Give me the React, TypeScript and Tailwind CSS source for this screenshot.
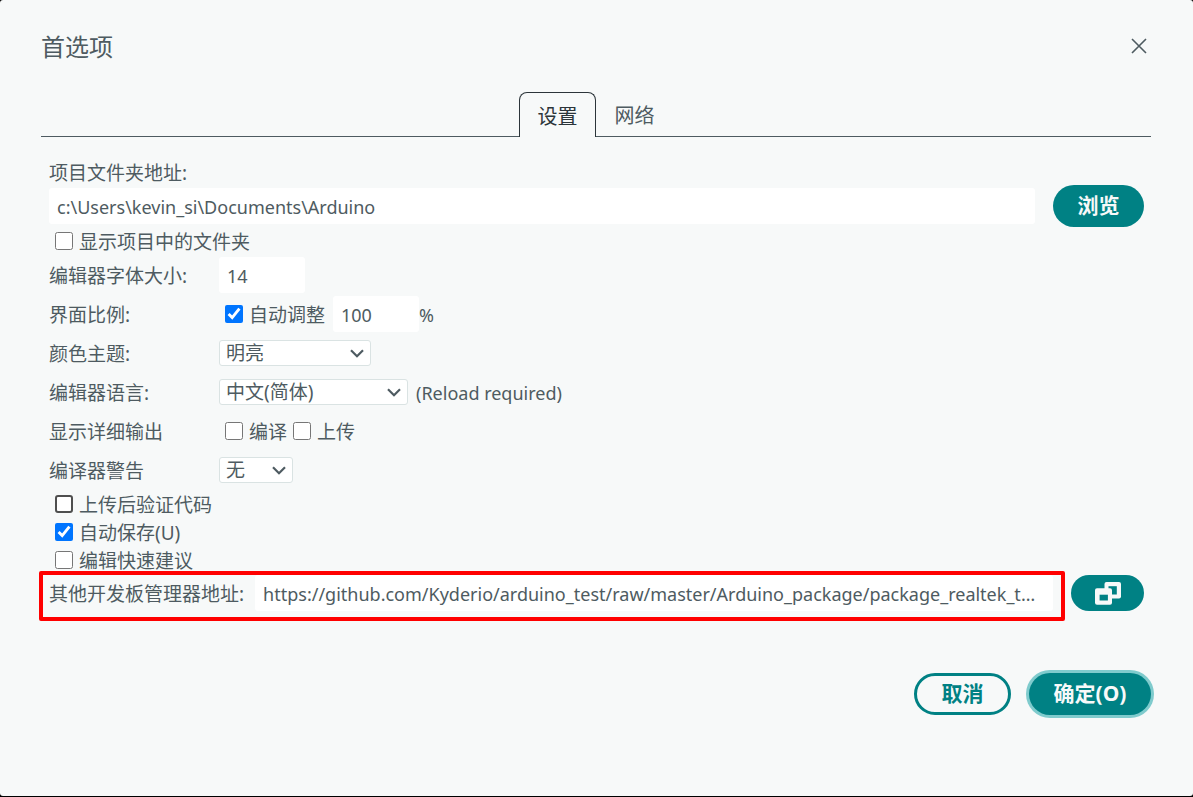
import React, { useState } from "react";

const TABS = ["设置", "网络"];

const BOARD_URL =
  "https://github.com/Kyderio/arduino_test/raw/master/Arduino_package/package_realtek_test_index.json";

function Check({
  id,
  label,
  defaultChecked,
  strong,
}: {
  id: string;
  label: string;
  defaultChecked?: boolean;
  strong?: boolean;
}) {
  return (
    <div className="flex h-7 items-center gap-[6px] pl-[6px]">
      <input
        id={id}
        type="checkbox"
        defaultChecked={defaultChecked}
        className={
          strong
            ? "size-[18px] appearance-none rounded-[3px] border-2 border-[#4f4f4f] bg-white checked:appearance-auto"
            : "size-[18px]"
        }
      />
      <label htmlFor={id} className="pt-0.5">
        {label}
      </label>
    </div>
  );
}

function Select({ id, options, width }: { id: string; options: string[]; width: string }) {
  return (
    <div className={`relative ${width}`}>
      <select
        id={id}
        className="block h-[26px] w-full appearance-none rounded-[3px] border border-[#dae3e3] bg-white pl-[6px] leading-6"
      >
        {options.map((o) => (
          <option key={o}>{o}</option>
        ))}
      </select>
      <svg
        viewBox="0 0 14 9"
        className="pointer-events-none absolute top-[9px] right-[7px] h-[9px] w-[14px]"
        fill="none"
        stroke="currentColor"
        strokeWidth="2.2"
        aria-hidden
      >
        <path d="M1 1.2 7 7.2l6-6" />
      </svg>
    </div>
  );
}

function Row({ label, htmlFor, children }: { label: string; htmlFor?: string; children: React.ReactNode }) {
  return (
    <div className="mb-[3px] flex h-9 items-center">
      {htmlFor ? (
        <label htmlFor={htmlFor} className="w-[170px] shrink-0 pt-0.5">
          {label}
        </label>
      ) : (
        <span className="w-[170px] shrink-0 pt-0.5">{label}</span>
      )}
      {children}
    </div>
  );
}

export default function App() {
  const [tab, setTab] = useState(0);

  return (
    <div className="flex min-h-screen flex-col bg-black pb-px">
      <div
        role="dialog"
        aria-labelledby="dialog-title"
        className="flex-1 rounded-[3px] bg-[#f7f9f9] pt-[33px] pr-[42px] pl-[41px] font-['Noto_Sans','Noto_Sans_CJK_SC',sans-serif] text-[19px] leading-7 text-[#4e5b61]"
      >
        <header className="flex h-7 items-center justify-between">
          <h1 id="dialog-title" className="text-[24px]">
            首选项
          </h1>
          <button type="button" aria-label="关闭" className="p-1 pb-[6px]">
            <svg viewBox="0 0 16 16" className="size-4" fill="none" stroke="currentColor" strokeWidth="1.6">
              <path d="M1 1l14 14M15 1L1 15" />
            </svg>
          </button>
        </header>

        <div role="tablist" className="mt-[31px] flex h-[45px] justify-center border-b border-[#4e5b61] text-[20px]">
          {TABS.map((t, i) => (
            <button
              key={t}
              type="button"
              role="tab"
              aria-selected={tab === i}
              onClick={() => setTab(i)}
              className={
                tab === i
                  ? "-mb-px w-[77px] rounded-t-lg border border-b-0 border-[#2c353a] bg-[#f7f9f9] pt-[3px] text-[#2c353a]"
                  : "w-[77px] pt-[3px]"
              }
            >
              {t}
            </button>
          ))}
        </div>

        <form className="mt-[22px] pr-[7px] pl-2" onSubmit={(e) => e.preventDefault()}>
          <label htmlFor="sketchbook" className="block">
            项目文件夹地址:
          </label>
          <div className="mt-px mb-[3px] flex h-9 items-center gap-[18px]">
            <input
              id="sketchbook"
              type="text"
              defaultValue="c:\Users\kevin_si\Documents\Arduino"
              className="h-9 min-w-0 flex-1 rounded-[3px] bg-white px-2 pt-0.5 text-[18px]"
            />
            <button
              type="button"
              className="h-[42px] w-[91px] shrink-0 rounded-full bg-[#008184] pb-0.5 text-[21px] font-bold text-[#f7f9f9]"
            >
              浏览
            </button>
          </div>

          <div className="mb-[2px]">
            <Check id="show-files" label="显示项目中的文件夹" />
          </div>

          <Row label="编辑器字体大小:" htmlFor="font-size">
            <input
              id="font-size"
              type="text"
              defaultValue="14"
              className="h-9 w-[86px] rounded-[3px] bg-white px-2 pt-0.5 text-[18px]"
            />
          </Row>
          <Row label="界面比例:">
            <Check id="auto-scale" label="自动调整" defaultChecked />
            <input
              type="text"
              aria-label="界面比例"
              defaultValue="100"
              className="ml-2 h-9 w-[86px] rounded-[3px] bg-white px-2 pt-0.5 text-[18px]"
            />
            <span className="pt-0.5 text-[18px]">%</span>
          </Row>
          <Row label="颜色主题:" htmlFor="theme">
            <Select id="theme" options={["明亮", "暗黑"]} width="w-[152px]" />
          </Row>
          <Row label="编辑器语言:" htmlFor="language">
            <Select id="language" options={["中文(简体)", "English"]} width="w-[189px]" />
            <span className="ml-2 pt-0.5 text-[18px]">(Reload required)</span>
          </Row>
          <Row label="显示详细输出">
            <Check id="verbose-compile" label="编译" />
            <Check id="verbose-upload" label="上传" />
          </Row>
          <Row label="编译器警告" htmlFor="warnings">
            <Select id="warnings" options={["无", "默认", "更多", "全部"]} width="w-[74px]" />
          </Row>

          <div className="-mt-px mb-px">
            <Check id="verify" label="上传后验证代码" strong />
            <Check id="auto-save" label="自动保存(U)" defaultChecked />
            <Check id="suggestions" label="编辑快速建议" />
          </div>

          <div className="flex h-9 gap-[6px]">
            <div className="relative flex min-w-0 flex-1 items-center gap-[11px] pr-3">
              <label htmlFor="board-urls" className="shrink-0 pt-0.5">
                其他开发板管理器地址:
              </label>
              <input
                id="board-urls"
                type="text"
                defaultValue={BOARD_URL}
                className="h-9 min-w-0 flex-1 rounded-[3px] bg-white px-2 pt-0.5 text-[18px] text-ellipsis"
              />
              <div className="pointer-events-none absolute -top-1 right-0 -bottom-[10px] -left-[10px] rounded-[2px] border-4 border-[#ff0000]" />
            </div>
            <button
              type="button"
              aria-label="编辑地址列表"
              className="grid h-9 w-[73px] shrink-0 place-items-center rounded-full bg-[#008184] text-[#f7f9f9]"
            >
              <svg viewBox="0 0 26 23" className="h-[23px] w-[26px]" aria-hidden>
                <rect x="9.5" y="0" width="16.5" height="16.5" rx="2" fill="currentColor" />
                <rect x="13.5" y="4.2" width="8.3" height="8.3" fill="#008184" />
                <rect x="0" y="6.3" width="17" height="16.5" rx="2" fill="currentColor" />
                <rect x="4.6" y="12.7" width="8.3" height="5.8" fill="#008184" />
              </svg>
            </button>
          </div>
        </form>

        <footer className="mt-[62px] mb-20 flex justify-end gap-[18px] text-[21px] font-bold">
          <button
            type="button"
            className="h-[42px] w-[97px] rounded-full border-3 border-[#008184] pb-0.5 text-[#008184]"
          >
            取消
          </button>
          <button
            type="button"
            className="h-[42px] w-[122px] rounded-full bg-[#008184] pb-0.5 text-[#f7f9f9] ring-3 ring-[#7fcbcd]"
          >
            确定(O)
          </button>
        </footer>
      </div>
    </div>
  );
}
